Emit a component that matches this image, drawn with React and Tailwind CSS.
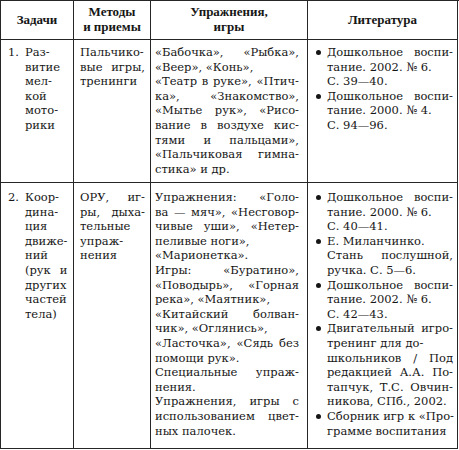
import React from 'react';

// A line is stretched edge to edge unless it is the last of its paragraph
// or marked plain (the book broke it by hand there).
const plain = (text) => ({ text, plain: true });

function Para({ lines }) {
  return (
    <div>
      {lines.map((line, i) => {
        const text = typeof line === 'string' ? line : line.text;
        const stretch = i < lines.length - 1 && typeof line === 'string';
        return (
          <div
            key={i}
            className={`whitespace-nowrap ${stretch ? 'text-justify [text-align-last:justify]' : ''}`}
          >
            {text}
          </div>
        );
      })}
    </div>
  );
}

function Numbered({ n, lines }) {
  return (
    <div className="flex">
      <span className="w-[17px] shrink-0">{n}.</span>
      <div className="flex-1">
        <Para lines={lines} />
      </div>
    </div>
  );
}

function Bullets({ items }) {
  return (
    <div>
      {items.map((lines, i) => (
        <div key={i} className="flex">
          <span className="w-[18px] shrink-0 flex justify-center pt-[5px]">
            <span className="block w-[5px] h-[5px] rounded-full bg-[#161616]" />
          </span>
          <div className="flex-1 min-w-0">
            <Para lines={lines} />
          </div>
        </div>
      ))}
    </div>
  );
}

const cell = 'border-r border-b border-[#262626] min-w-0';
const head = `${cell} flex flex-col items-center justify-center font-bold text-[13px] [font-family:'Liberation_Serif',serif]`;

export default function App() {
  return (
    <div className="w-[459px] h-[450px] bg-white overflow-hidden text-[#161616] text-[11.5px] leading-[14.6px] [font-family:'DejaVu_Serif',serif]">
      <div className="grid grid-cols-[73px_77px_157px_150px] grid-rows-[39px_143px_266px] border-l border-t border-[#262626]">
        {/* header */}
        <div className={head}>Задачи</div>
        <div className={head}>
          <div>Методы</div>
          <div>и приемы</div>
        </div>
        <div className={head}>
          <div>Упражнения,</div>
          <div>игры</div>
        </div>
        <div className={head}>Литература</div>

        {/* row 1 */}
        <div className={`${cell} pl-[7px] pr-[6px] pt-[5px]`}>
          <Numbered n={1} lines={['Раз-', 'витие', 'мел-', 'кой', 'мото-', 'рики']} />
        </div>
        <div className={`${cell} pl-[6px] pr-[5px] pt-[5px]`}>
          <Para lines={['Пальчико-', 'вые игры,', 'тренинги']} />
        </div>
        <div className={`${cell} pl-[4px] pr-[8px] pt-[5px]`}>
          <Para
            lines={[
              '«Бабочка», «Рыбка»,',
              plain('«Веер», «Конь»,'),
              '«Театр в руке», «Птич-',
              'ка», «Знакомство»,',
              '«Мытье рук», «Рисо-',
              'вание в воздухе кис-',
              'тями и пальцами»,',
              '«Пальчиковая гимна-',
              'стика» и др.',
            ]}
          />
        </div>
        <div className={`${cell} pl-[1px] pr-[4px] pt-[5px]`}>
          <Bullets
            items={[
              ['Дошкольное воспи-', plain('тание. 2002. № 6.'), 'С. 39—40.'],
              ['Дошкольное воспи-', plain('тание. 2000. № 4.'), 'С. 94—96.'],
            ]}
          />
        </div>

        {/* row 2 */}
        <div className={`${cell} pl-[7px] pr-[6px] pt-[7px]`}>
          <Numbered
            n={2}
            lines={['Коор-', 'дина-', 'ция', 'движе-', 'ний', '(рук и', 'других', 'частей', 'тела)']}
          />
        </div>
        <div className={`${cell} pl-[6px] pr-[5px] pt-[7px]`}>
          <Para lines={['ОРУ, иг-', 'ры, дыха-', plain('тельные'), plain('упраж-'), 'нения']} />
        </div>
        <div className={`${cell} pl-[4px] pr-[8px] pt-[7px]`}>
          <Para
            lines={[
              'Упражнения: «Голо-',
              'ва — мяч», «Несговор-',
              'чивые уши», «Нетер-',
              plain('пеливые ноги»,'),
              '«Марионетка».',
            ]}
          />
          <Para
            lines={[
              'Игры: «Буратино»,',
              '«Поводырь», «Горная',
              plain('река», «Маятник»,'),
              '«Китайский болван-',
              plain('чик», «Оглянись»,'),
              '«Ласточка», «Сядь без',
              'помощи рук».',
            ]}
          />
          <Para lines={['Специальные упраж-', 'нения.']} />
          <Para lines={['Упражнения, игры с', 'использованием цвет-', 'ных палочек.']} />
        </div>
        <div className={`${cell} pl-[1px] pr-[4px] pt-[7px]`}>
          <Bullets
            items={[
              ['Дошкольное воспи-', plain('тание. 2000. № 6.'), 'С. 40—41.'],
              [plain('Е. Миланчинко.'), 'Стань послушной,', 'ручка. С. 5—6.'],
              ['Дошкольное воспи-', plain('тание. 2002. № 6.'), 'С. 42—43.'],
              [
                'Двигательный игро-',
                plain('тренинг для до-'),
                'школьников / Под',
                'редакцией А.А. По-',
                'тапчук, Т.С. Овчин-',
                'никова, СПб., 2002.',
              ],
              ['Сборник игр к «Про-', 'грамме воспитания'],
            ]}
          />
        </div>
      </div>
    </div>
  );
}
